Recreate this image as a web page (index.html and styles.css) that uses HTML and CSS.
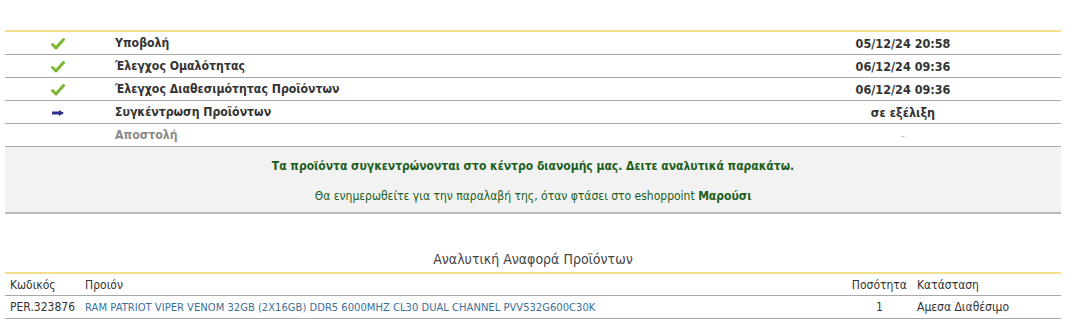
FILE: index.html
```html
<!DOCTYPE html>
<html lang="el">
<head>
    <meta charset="UTF-8">
    <title>Παραγγελία</title>
    <link rel="stylesheet" href="styles.css">
</head>
<body>
    <div class="container">
        <table class="steps">
            <tbody>
                <tr>
                    <td class="icon"><svg width="14" height="12" viewBox="0 0 14 12"><path d="M1.5 6.5 L5 10 L12.5 1.5" fill="none" stroke="#7cb832" stroke-width="3" stroke-linecap="round" stroke-linejoin="round"/></svg></td>
                    <td class="step">Υποβολή</td>
                    <td class="date">05/12/24 20:58</td>
                </tr>
                <tr>
                    <td class="icon"><svg width="14" height="12" viewBox="0 0 14 12"><path d="M1.5 6.5 L5 10 L12.5 1.5" fill="none" stroke="#7cb832" stroke-width="3" stroke-linecap="round" stroke-linejoin="round"/></svg></td>
                    <td class="step">Έλεγχος Ομαλότητας</td>
                    <td class="date">06/12/24 09:36</td>
                </tr>
                <tr>
                    <td class="icon"><svg width="14" height="12" viewBox="0 0 14 12"><path d="M1.5 6.5 L5 10 L12.5 1.5" fill="none" stroke="#7cb832" stroke-width="3" stroke-linecap="round" stroke-linejoin="round"/></svg></td>
                    <td class="step">Έλεγχος Διαθεσιμότητας Προϊόντων</td>
                    <td class="date">06/12/24 09:36</td>
                </tr>
                <tr>
                    <td class="icon"><svg width="12" height="6" viewBox="0 0 12 6"><path d="M0 1.5 H7 V0 L12 3 L7 6 V4.5 H0 Z" fill="#2b2f8a"/></svg></td>
                    <td class="step">Συγκέντρωση Προϊόντων</td>
                    <td class="date">σε εξέλιξη</td>
                </tr>
                <tr class="pending">
                    <td class="icon"></td>
                    <td class="step">Αποστολή</td>
                    <td class="date">-</td>
                </tr>
            </tbody>
        </table>

        <div class="notice">
            <p class="notice-main">Τα προϊόντα συγκεντρώνονται στο κέντρο διανομής μας. Δειτε αναλυτικά παρακάτω.</p>
            <p class="notice-sub">Θα ενημερωθείτε για την παραλαβή της, όταν φτάσει στο eshoppoint <b>Μαρούσι</b></p>
        </div>

        <h2 class="report-title">Αναλυτική Αναφορά Προϊόντων</h2>
        <table class="products">
            <thead>
                <tr>
                    <th class="code">Κωδικός</th>
                    <th>Προιόν</th>
                    <th class="qty">Ποσότητα</th>
                    <th class="status">Κατάσταση</th>
                </tr>
            </thead>
            <tbody>
                <tr>
                    <td class="code">PER.323876</td>
                    <td class="name"><a href="#">RAM PATRIOT VIPER VENOM 32GB (2X16GB) DDR5 6000MHZ CL30 DUAL CHANNEL PVV532G600C30K</a></td>
                    <td class="qty">1</td>
                    <td class="status">Αμεσα Διαθέσιμο</td>
                </tr>
            </tbody>
        </table>
    </div>
</body>
</html>
```

FILE: styles.css
```css
body {
    font-family: "DejaVu Sans Condensed", "DejaVu Sans", sans-serif;
    font-size: 12px;
    color: #333;
    margin: 0;
    padding: 0;
    background: #fff;
}
.container {
    width: 1056px;
    margin-left: 5px;
    padding-top: 30px;
}
table {
    width: 100%;
    border-collapse: collapse;
}
.steps {
    border-top: 2px solid #f3df8e;
}
.steps td {
    height: 22px;
    padding: 0;
    border-bottom: 1px solid #a8a8a8;
}
.steps .icon {
    width: 106px;
    text-align: center;
}
.steps .icon svg {
    display: inline-block;
    vertical-align: middle;
}
.steps .step {
    font-weight: bold;
    font-size: 12.2px;
    padding-left: 4px;
}
.steps .date {
    width: 316px;
    text-align: center;
    font-weight: bold;
    font-size: 12.5px;
}
.pending td {
    color: #8a8a8a;
}
.pending .date {
    font-weight: normal;
    color: #bbb;
}
.notice {
    background: #f2f2f2;
    border-bottom: 2px solid #bcbcbc;
    text-align: center;
    color: #1b5e20;
    padding: 12px 0 9px;
}
.notice p {
    margin: 0;
}
.notice-main {
    font-weight: bold;
    font-size: 12px;
    margin-bottom: 16px !important;
}
.notice-sub {
    font-size: 12px;
}
.report-title {
    font-size: 14px;
    font-weight: normal;
    color: #444;
    text-align: center;
    margin: 37px 0 5px;
}
.products {
    border-top: 2px solid #f3df8e;
}
.products th, .products td {
    height: 21px;
    padding: 0 5px;
    text-align: left;
    font-weight: normal;
    border-bottom: 1px solid #a8a8a8;
}
.products td {
    height: 22px;
}
.products .code {
    width: 65px;
}
.products .name a {
    font-family: "DejaVu Sans", sans-serif;
    color: #3a6f9a;
    text-decoration: none;
    font-size: 10px;
}
.products .qty {
    width: 55px;
    text-align: center;
}
.products th.qty {
    text-align: left;
}
.products .status {
    width: 139px;
}
```
